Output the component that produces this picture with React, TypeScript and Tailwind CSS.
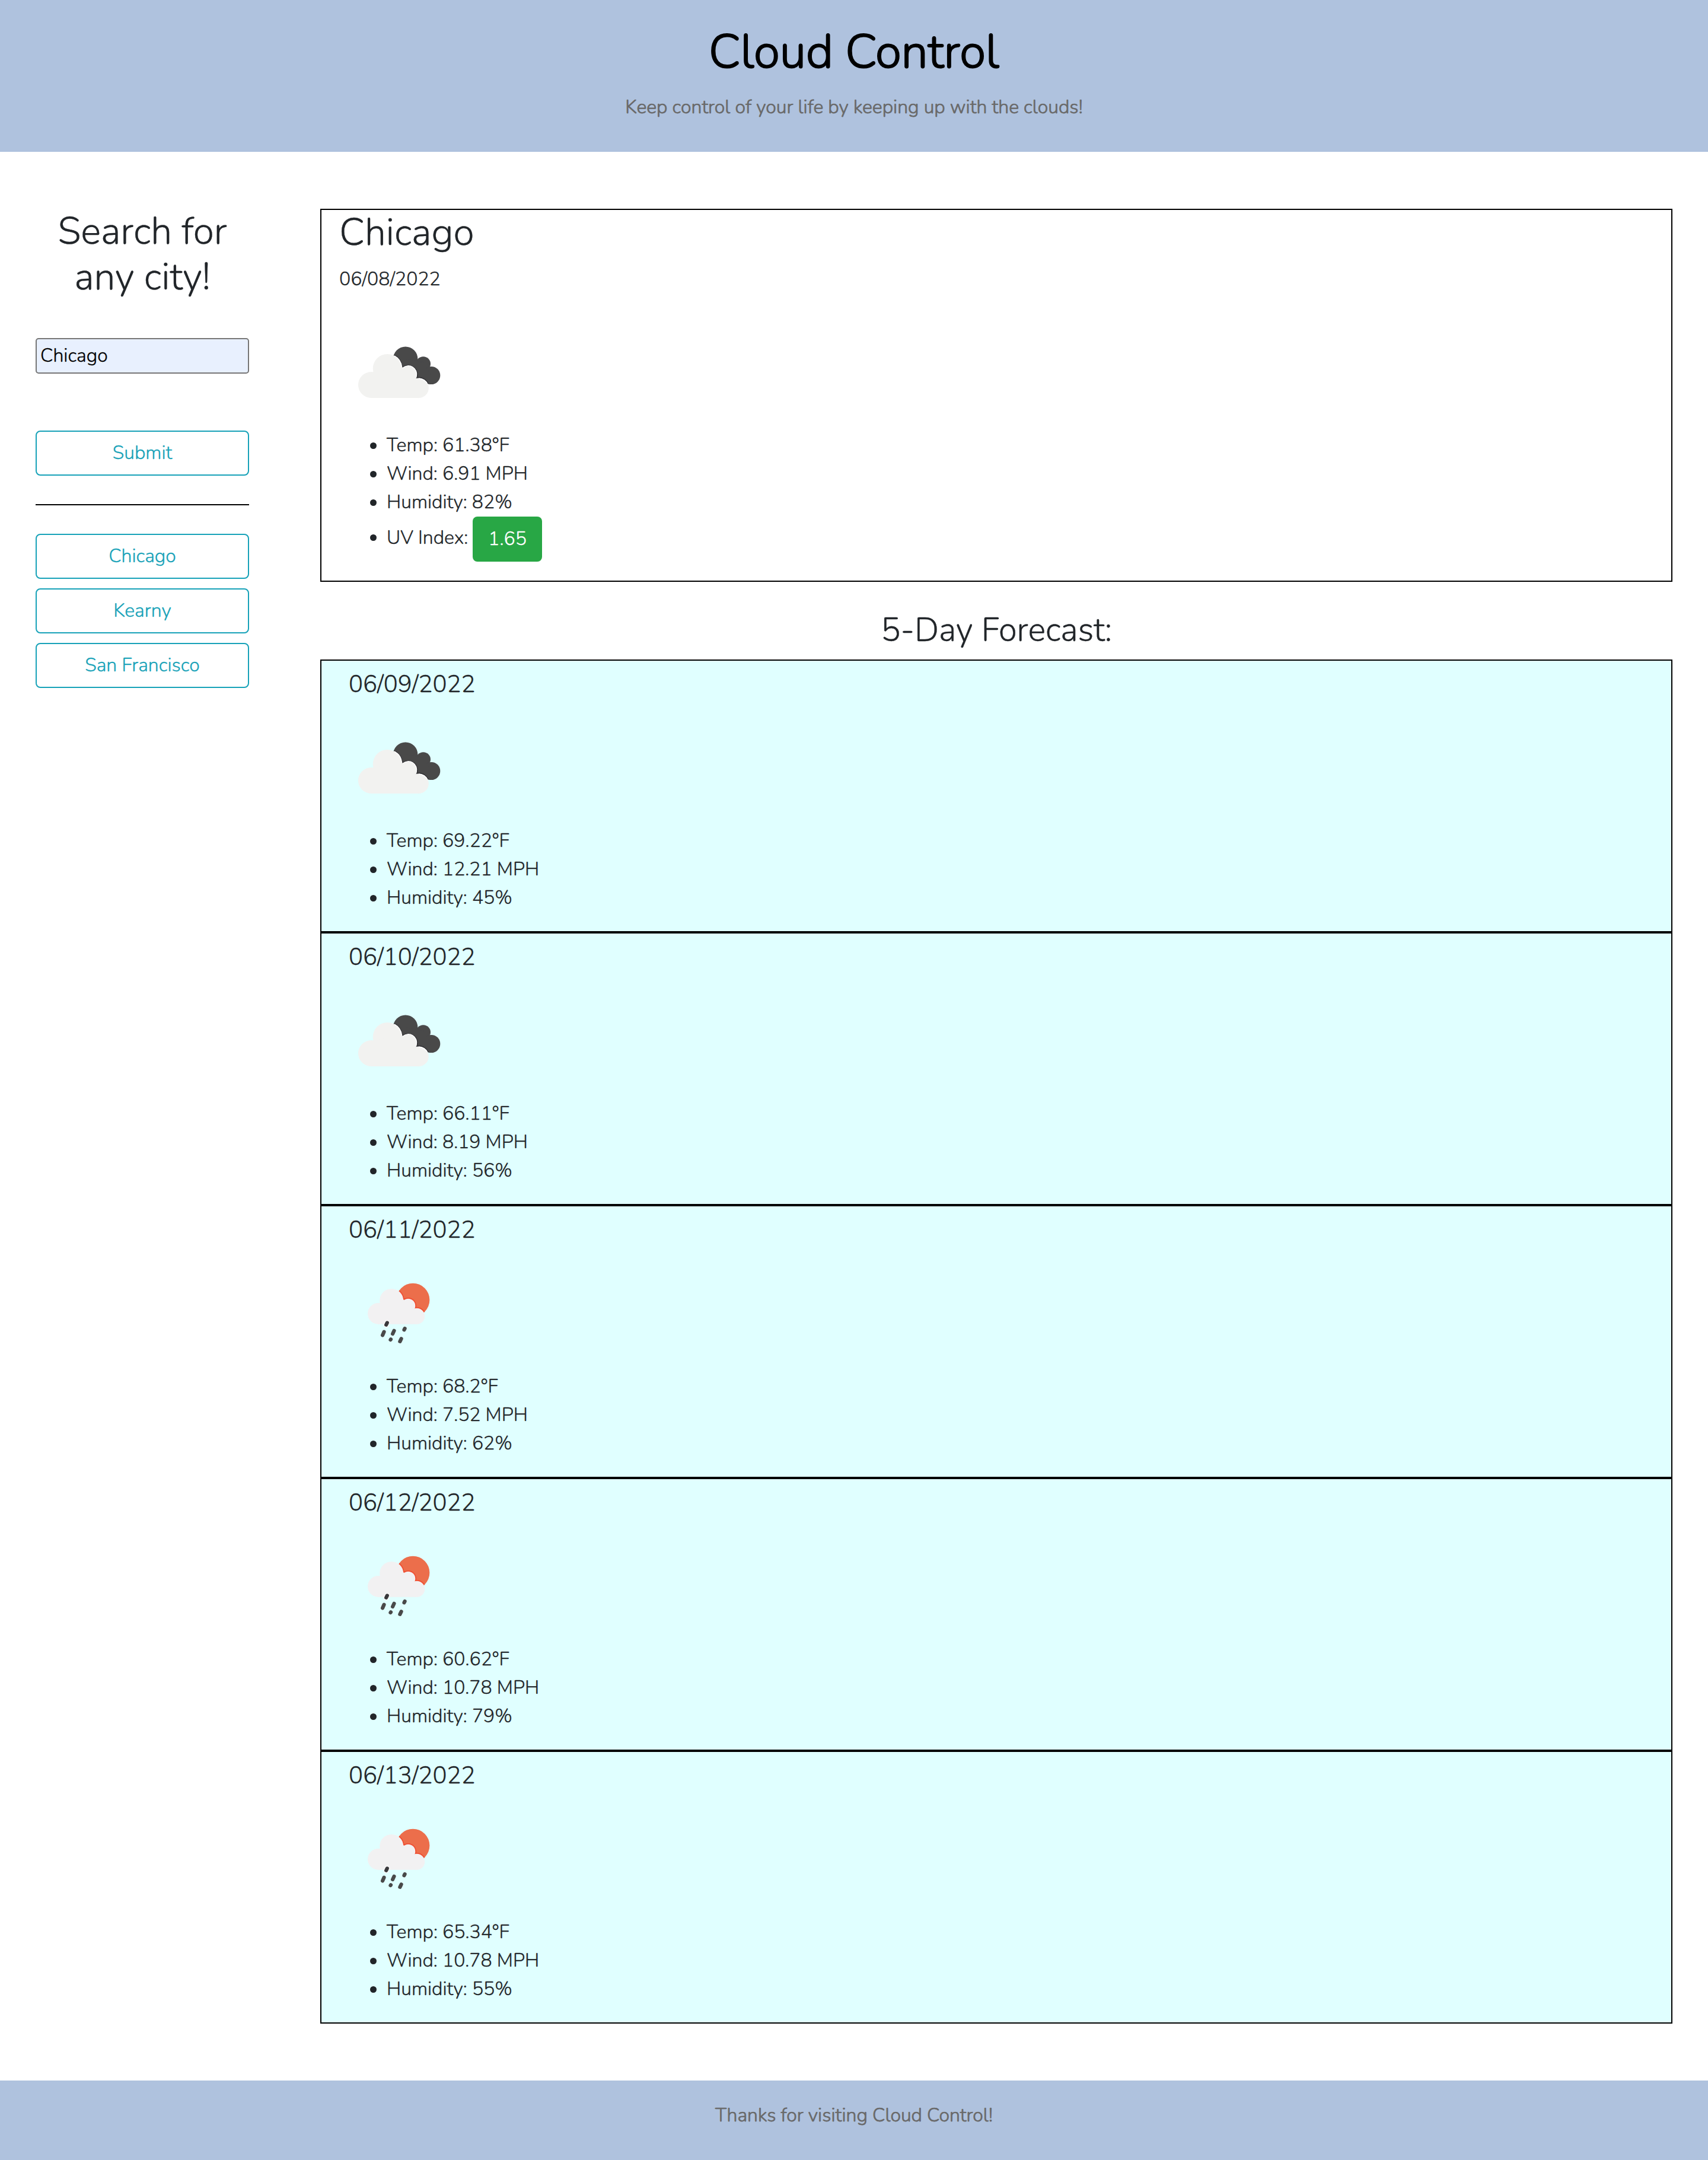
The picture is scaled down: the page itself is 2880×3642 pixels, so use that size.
import type { ReactNode } from 'react';

type IconKind = 'clouds' | 'rain';
type Circle = [cx: number, cy: number, r: number];

interface Day {
  date: string;
  icon: IconKind;
  temp: string;
  wind: string;
  humidity: string;
}

const cities = ['Chicago', 'Kearny', 'San Francisco'];

const forecast: Day[] = [
  { date: '06/09/2022', icon: 'clouds', temp: '69.22', wind: '12.21', humidity: '45' },
  { date: '06/10/2022', icon: 'clouds', temp: '66.11', wind: '8.19', humidity: '56' },
  { date: '06/11/2022', icon: 'rain', temp: '68.2', wind: '7.52', humidity: '62' },
  { date: '06/12/2022', icon: 'rain', temp: '60.62', wind: '10.78', humidity: '79' },
  { date: '06/13/2022', icon: 'rain', temp: '65.34', wind: '10.78', humidity: '55' },
];

const backCloud: Circle[] = [
  [111.7, 78.2, 20.7],
  [141.7, 86.5, 12.3],
  [155.2, 106, 15.1],
];

const frontCloud: Circle[] = [
  [54, 122, 22],
  [81.3, 94.4, 24.5],
  [116.3, 104.8, 14.8],
  [134, 127.2, 16.8],
];

const rainCloud: Circle[] = [
  [65.9, 100.8, 17.9],
  [88.2, 79, 20],
  [116.3, 87.8, 12],
  [130.8, 105.2, 13.5],
];

function Circles({ list, grow = 0 }: { list: Circle[]; grow?: number }) {
  return (
    <>
      {list.map(([cx, cy, r]) => (
        <circle key={cx} cx={cx} cy={cy} r={r + grow} />
      ))}
    </>
  );
}

function CloudsIcon() {
  return (
    <svg viewBox="0 0 200 200" className="block size-[200px]" aria-label="Broken clouds">
      <defs>
        <filter id="clouds-soft" x="-5%" y="-5%" width="110%" height="110%">
          <feGaussianBlur stdDeviation="0.5" />
        </filter>
        <clipPath id="clouds-back">
          <Circles list={backCloud} />
          <path d="M112 78 L142 84 L155 106 L149 119 L112 105 Z" />
        </clipPath>
      </defs>
      <g filter="url(#clouds-soft)">
        <g fill="#48484a">
          <Circles list={backCloud} />
          <path d="M112 78 L142 84 L155 106 L149 119 L112 105 Z" />
        </g>
        <g clipPath="url(#clouds-back)">
          <g fill="#323234">
            <Circles list={frontCloud} grow={1.6} />
          </g>
        </g>
        <g fill="#f2f2f0">
          <Circles list={frontCloud} />
          <path d="M54 144 L57 100 L106 92 L128 108 L134 144 Z" />
        </g>
        <g clipPath="url(#clouds-back)">
          <g fill="none" stroke="#ffffff" strokeWidth="1.4">
            <path d="M92.9 72.8 A24.5 24.5 0 0 1 105.6 92" />
            <path d="M107 93.5 A14 14 0 0 1 130 107.5" />
            <path d="M134 111.2 A16 16 0 0 1 149 121" />
          </g>
        </g>
      </g>
    </svg>
  );
}

function RainIcon() {
  return (
    <svg viewBox="0 0 200 200" className="block size-[200px]" aria-label="Rain">
      <defs>
        <filter id="rain-soft" x="-5%" y="-5%" width="110%" height="110%">
          <feGaussianBlur stdDeviation="0.6" />
        </filter>
        <clipPath id="rain-sun">
          <circle cx="124.3" cy="77.8" r="28.1" />
        </clipPath>
      </defs>
      <g filter="url(#rain-soft)">
        <circle cx="124.3" cy="77.8" r="28.1" fill="#ec6e4c" />
        <g clipPath="url(#rain-sun)" fill="#f04e30">
          <Circles list={rainCloud} grow={1.8} />
        </g>
        <g fill="#f2f1f2">
          <Circles list={rainCloud} />
          <path d="M65.9 118.7 L68 83 L108 77 L126 90 L130.8 118.7 Z" />
        </g>
        <path d="M80.8 116.4 L79.2 119.8" stroke="#fafafa" strokeWidth="9" strokeLinecap="round" />
        <g stroke="#48484a" strokeWidth="6.2" strokeLinecap="round">
          <path d="M80.8 116.4 L79.2 119.8" stroke="#38383a" />
          <path d="M75.5 131.7 L73.1 137.3" />
          <path d="M92.5 129.7 L90.1 135" />
          <path d="M110.6 126 L109.5 128.2" />
          <path d="M87 144.3 L86.5 145" />
          <path d="M104.6 143.3 L102.4 147.8" />
        </g>
      </g>
    </svg>
  );
}

function WeatherIcon({ kind }: { kind: IconKind }) {
  return kind === 'clouds' ? <CloudsIcon /> : <RainIcon />;
}

function Item({ children }: { children: ReactNode }) {
  return (
    <li className="flex items-center">
      <span className="-ml-[28px] mr-[17px] mt-px size-[11px] shrink-0 rounded-full bg-[#212529]" />
      {children}
    </li>
  );
}

function OutlineButton({ children }: { children: ReactNode }) {
  return (
    <button
      type="button"
      className="block h-[76px] w-full rounded-lg border-2 border-[#17a2b8] text-center leading-[48px] text-[#17a2b8]"
    >
      {children}
    </button>
  );
}

function ForecastCard({ day }: { day: Day }) {
  return (
    <article className="h-[460px] border-2 border-black bg-[#e0ffff] px-[30px] pt-4">
      <h4 className="mb-4 pl-4 text-[40px] leading-[48px]">{day.date}</h4>
      <WeatherIcon kind={day.icon} />
      <ul className="pl-20">
        <Item>Temp: {day.temp}°F</Item>
        <Item>Wind: {day.wind} MPH</Item>
        <Item>Humidity: {day.humidity}%</Item>
      </ul>
    </article>
  );
}

export default function App() {
  return (
    <div className="flex min-h-[3642px] w-[2880px] flex-col bg-white font-['Nunito','Lato',sans-serif] text-[32px] leading-[48px] font-light text-[#212529] [-webkit-text-stroke:0.35px_currentColor]">
      <header className="h-[256px] bg-[#afc2de] pt-10 text-center">
        <h1 className="text-[80px] leading-[96px] text-black [-webkit-text-stroke:2px_#000]">Cloud Control</h1>
        <p className="mt-[21px] text-[#696969] [-webkit-text-stroke:0.75px_#696969]">
          Keep control of your life by keeping up with the clouds!
        </p>
      </header>

      <div className="flex pt-24">
        <aside className="ml-[60px] w-[360px]">
          <h2 className="px-6 text-center text-[64px] leading-[77px]">Search for any city!</h2>
          <form onSubmit={(e) => e.preventDefault()}>
            <input
              defaultValue="Chicago"
              aria-label="City"
              className="mt-16 block h-[60px] w-full rounded-[5px] border-2 border-[#767676] bg-[#e8f0fe] px-1.5 pb-0.5 text-black outline-none"
            />
            <div className="mt-24">
              <OutlineButton>Submit</OutlineButton>
            </div>
          </form>
          <hr className="my-12 border-t-2 border-black" />
          <div className="flex flex-col gap-4">
            {cities.map((city) => (
              <OutlineButton key={city}>{city}</OutlineButton>
            ))}
          </div>
        </aside>

        <main className="ml-[120px] w-[2280px]">
          <section className="h-[629px] border-2 border-black px-[30px]">
            <h2 className="text-[64px] leading-[77px]">Chicago</h2>
            <p className="mt-4 mb-8">06/08/2022</p>
            <WeatherIcon kind="clouds" />
            <ul className="pl-20">
              <Item>Temp: 61.38°F</Item>
              <Item>Wind: 6.91 MPH</Item>
              <Item>Humidity: 82%</Item>
              <li className="flex h-[76px] items-start">
                <span className="-ml-[28px] mt-[30px] mr-[17px] size-[11px] shrink-0 rounded-full bg-[#212529]" />
                <span className="mt-3 mr-2">UV Index:</span>
                <span className="h-[76px] rounded-lg bg-[#28a745] px-[26px] pt-[14px] text-white">1.65</span>
              </li>
            </ul>
          </section>

          <h3 className="mt-12 mb-4 pt-px text-center text-[56px] leading-[66px]">5-Day Forecast:</h3>
          {forecast.map((day) => (
            <ForecastCard key={day.date} day={day} />
          ))}
        </main>
      </div>

      <footer className="mt-24 h-[134px] bg-[#afc2de] pt-[35px] text-center text-[#696969] [-webkit-text-stroke:0.75px_#696969]">
        Thanks for visiting Cloud Control!
      </footer>
    </div>
  );
}
